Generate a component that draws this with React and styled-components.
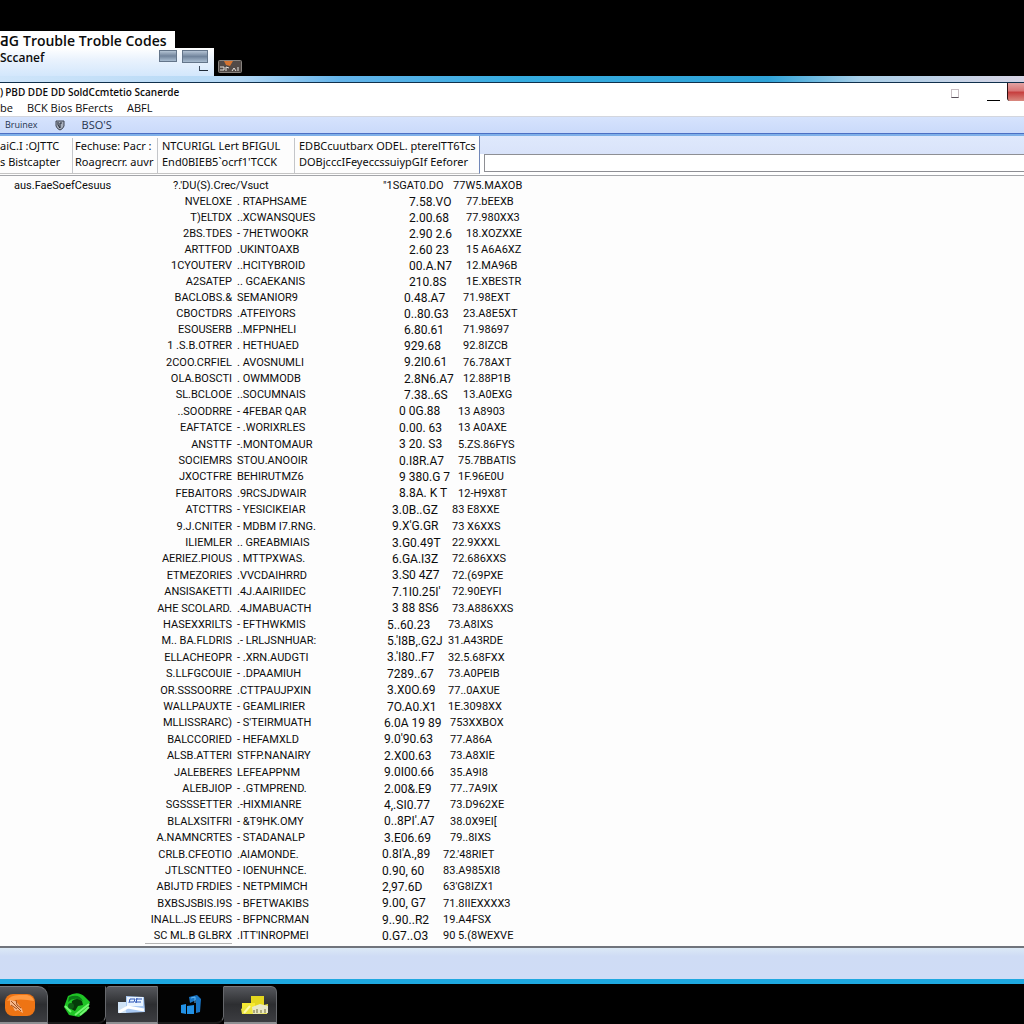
import React from "react";
import styled, { createGlobalStyle, css } from "styled-components";

const Global = createGlobalStyle`
  *, *::before, *::after { box-sizing: border-box; }
  body { margin: 0; background: #000; overflow: hidden; }
  button { margin: 0; padding: 0; border: 0; background: none; font: inherit; color: inherit; }
`;

const Desktop = styled.div`
  min-height: 100vh;
  display: flex;
  flex-direction: column;
  background: #000;
  color: #0c0c0c;
  font-family: "Open Sans", "Noto Sans", sans-serif;
  white-space: nowrap;
  overflow: hidden;
`;

const Banner = styled.header`
  display: flex;
  flex-direction: column;
  align-items: flex-start;
  padding-top: 31px;
`;

const BannerTitle = styled.h1`
  margin: 0;
  width: 175px;
  height: 17px;
  background: #fff;
  font-size: 14px;
  line-height: 20px;
  font-weight: 600;
  display: flex;
  gap: 4px;
`;

const BannerRow = styled.div`
  display: flex;
  align-items: flex-end;
  gap: 4px;
`;

const BannerTab = styled.div`
  width: 214px;
  height: 28px;
  display: flex;
  justify-content: space-between;
  background: linear-gradient(#fff 0, #e9f2fd 12px, #d3e7fc);
  font-size: 12px;
  line-height: 20px;
  font-weight: 600;
`;

const TabControls = styled.div`
  display: grid;
  grid-template-columns: 18px 26px;
  gap: 3px 5px;
  align-content: start;
  justify-items: end;
  padding: 2px 6px 0 0;
`;

const GlassButton = styled.button`
  width: 100%;
  height: ${(p) => p.$h}px;
  align-self: start;
  border: 1px solid #64758a;
  background: linear-gradient(#b4c3d4, #71849c 50%, #a9bcd0);
`;

const CornerButton = styled.button`
  grid-column: 1 / 3;
  width: 9px;
  height: 5px;
  border-left: 1px solid #3c4a5c;
  border-bottom: 1px solid #1f2a38;
`;

const Badge = styled.span`
  display: block;
  height: 13px;
  margin-bottom: 3px;
`;

const Window = styled.main`
  flex: 1;
  display: flex;
  flex-direction: column;
  background: #fdfdfd;
`;

const GlassEdge = styled.div`
  height: 7px;
  border-bottom: 1px solid #10304c;
  background: linear-gradient(90deg, #cfe5fa 0, #b4d8f5 240px, #64b4ea 340px, #35ace0 520px, #2fa3d8 75%, #a9cfe8 84%, #d8d4e4 100%);
`;

const Caption = styled.div`
  display: flex;
  justify-content: space-between;
  height: 33px;
  background: #fff;
`;

const CaptionText = styled.div`
  display: flex;
  flex-direction: column;
  padding-top: 2px;
  font-size: 11px;
  line-height: 15px;
`;

const WindowTitle = styled.h2`
  margin: 0;
  display: flex;
  gap: 2px;
  font: inherit;
  font-size: 10px;
  font-weight: 600;
`;

const Menu = styled.nav`
  display: flex;
  gap: 14px;
`;

const CaptionControls = styled.div`
  display: flex;
  align-items: flex-start;
`;

const Restore = styled.button`
  width: 8px;
  height: 9px;
  margin: 6px 28px 0 0;
  border: 1px solid #c9bfc4;
  border-bottom: 1px solid #59505a;
`;

const Minimise = styled.button`
  width: 13px;
  height: 18px;
  margin-right: 7px;
  border-bottom: 1px solid #000;
`;

const Close = styled.button`
  width: 17px;
  height: 18px;
  border-left: 1px solid #2a0f12;
  border-radius: 0 0 0 3px;
  background: linear-gradient(#e2a3a3, #d87474 45%, #c63c3c 50%, #d98a80);
`;

const Toolbar = styled.div`
  display: flex;
  align-items: center;
  height: 18px;
  padding-left: 5px;
  gap: 17px;
  background: linear-gradient(#d6e3fd, #cadafa);
  border-top: 1px solid #d3d6de;
  border-bottom: 1px solid #4c70c4;
  color: #26344e;
  font-size: 11px;
  line-height: 16px;
`;

const Tool = styled.button`
  display: flex;
  font-size: ${(p) => p.$size || 11}px;
`;

const TabStrip = styled.div`
  display: flex;
  height: 42px;
  border-top: 2px solid #7fb0e8;
  border-bottom: 1px solid #a4a6aa;
`;

const TabList = styled.nav`
  display: grid;
  grid-template-columns: 72px 85px 137px 185px;
  height: 38px;
  padding-top: 2px;
  border-bottom: 1px solid #c4c4c4;
  border-right: 1px solid #7187b8;
`;

const Tab = styled.button`
  display: flex;
  flex-direction: column;
  align-items: flex-start;
  padding-left: ${(p) => p.$pad}px;
  border-left: ${(p) => (p.$first ? 0 : 1)}px solid #c4c6ca;
  font-family: "Noto Sans", sans-serif;
  font-size: 11px;
  line-height: 16px;
`;

const SidePanel = styled.div`
  flex: 1;
  display: flex;
  flex-direction: column;
  padding: 0 0 3px 4px;
  background: linear-gradient(#dfe9fc, #d9e3fa 18px, #fff 18px);
`;

const Search = styled.input`
  width: 100%;
  height: 18px;
  margin-top: 18px;
  padding: 0 4px;
  border: 1px solid #8e8f94;
  border-right: 0;
  background: #fff;
  outline: 0;
`;

const Content = styled.section`
  flex: 1;
  padding-top: 2px;
`;

const Codes = styled.table`
  width: 540px;
  table-layout: fixed;
  border-collapse: collapse;
  font-family: Roboto, "Open Sans", sans-serif;
  font-size: 11px;
  line-height: 16px;
  text-align: left;

  th, td { padding: 0; font-weight: 400; height: 16px; }
`;

const Column = styled.col`
  width: ${(p) => p.$w}px;
`;

const Row = styled.tr`
  ${(p) =>
    p.$tall &&
    css`
      td { line-height: 17px; }
    `}
`;

const Cell = styled.td`
  && {
    padding-left: ${(p) => p.$lead || 0}px;
    text-align: ${(p) => (p.$end ? "right" : "left")};
    box-shadow: ${(p) => (p.$ruled ? "0 -1px 0 #b5b5b5 inset" : "none")};
  }
`;

const Reading = styled(Cell)`
  font-size: 12px;
`;

const HeadCell = styled.th`
  && { padding-left: ${(p) => p.$lead}px; }
`;

const StatusBar = styled.footer`
  height: 38px;
  border-top: 2px solid #70747c;
  border-bottom: 5px solid #1ea8e0;
  background: linear-gradient(#dbe9f6, #cfdcf5 8px, #cfdcf6);
`;

const Taskbar = styled.nav`
  display: flex;
  height: 40px;
  padding-top: 2px;
  background: #000;
`;

const Task = styled.button`
  display: flex;
  align-items: center;
  justify-content: center;
  width: ${(p) => p.$w}px;
  padding: 0 ${(p) => p.$right || 0}px 0 ${(p) => p.$left || 0}px;
  border-top: 1px solid ${(p) => (p.$lit ? "#77797d" : "#0a0a0a")};
  border-right: 1px solid #66686c;
  border-bottom: 2px solid ${(p) => (p.$lit ? "#8d8f92" : "#1b1b1b")};
  border-radius: ${(p) => p.$round || "0"};
  background: ${(p) => (p.$lit ? "linear-gradient(#55575c, #2d2e31 50%, #3c3d41)" : "#030303")};
`;

const OrangeIcon = () => (
  <svg width="30" height="24" viewBox="0 0 30 24">
    <rect x="0" y="1" width="30" height="22" rx="8" fill="#ee7414" />
    <path d="M2 8Q5 2 14 2h8q6 1 7 6-13-3-27 0Z" fill="#ff9a42" />
    <path d="M5 7l6 1 6 8 1 4-5-3-3 1-2-4-3-2Z" fill="#f6b78a" />
    <path d="M6 8l10 10M6 12l6 4M11 7l1 5 4 3" stroke="#9f4c19" fill="none" />
  </svg>
);

const GreenIcon = () => (
  <svg width="28" height="24" viewBox="0 0 28 24">
    <path d="M5 3Q15-3 22 4l5 5-3 9-8 6-10-2-5-8Z" fill="#1fc425" />
    <path d="M6 4q10-4 14 4-9-5-15 1Z" fill="#0a7a16" />
    <path d="M9 8q5-4 10 0l1 4-5 1-3 5-4-2Z" fill="#053a09" />
    <path d="M2 13l6 6M12 22L26 11M17 22l9-8" stroke="#75f573" strokeWidth="2" fill="none" />
    <circle cx="8" cy="13" r="3" fill="#0d5a13" />
  </svg>
);

const DocumentIcon = () => (
  <svg width="28" height="20" viewBox="0 0 28 20">
    <path d="M0 7h9v11H0Z" fill="#cfe2f5" />
    <path d="M8 1l18 1 1 15-19 1Z" fill="#a9c9f3" />
    <path d="M9 2h16v9H9Z" fill="#e9f4ff" />
    <path d="M11 8l1-4h5l-1 3h-4M18 4h6M17 7h6M19 3l-1 5" fill="none" stroke="#2b55b8" />
    <path d="M1 17l9-5 16 3" stroke="#fff" strokeWidth="3" fill="none" />
  </svg>
);

const BlueIcon = () => (
  <svg width="20" height="20" viewBox="0 0 20 20">
    <path d="M0 10l5-1v10l-5-1ZM6 11l7-1v9H6Z" fill="#2291e5" />
    <path d="M8 2l8-2 4 4-1 13-4 1V5L9 8Z" fill="#1875c5" />
    <path d="M10 3l4-1v6" stroke="#64b9f3" fill="none" />
  </svg>
);

const YellowIcon = () => (
  <svg width="28" height="20" viewBox="0 0 28 20">
    <path d="M10 1h13v10H10Z" fill="#e4d61e" />
    <path d="M1 8h13v10H1Z" fill="#f7e930" />
    <path d="M0 14l7-5 3 4 17-4-1 10H1Z" fill="#ece53f" />
    <path d="M11 12l8-3 8 2v7l-15 1Z" fill="#e9e8c8" />
    <path d="M13 18v-3M16 18v-4M20 18v-3M24 18v-4" stroke="#6f6b36" />
    <path d="M3 18l6-7" stroke="#fff9a8" strokeWidth="2" />
  </svg>
);

const BadgeIcon = () => (
  <svg width="24" height="13" viewBox="0 0 24 13" display="block">
    <rect x=".5" y=".5" width="23" height="12" rx="1" fill="#514a47" stroke="#87827e" />
    <path d="M6 1h9l-3 5-4-1Z" fill="#d47431" />
    <path d="M2 7h4v3H2M8 11V7l3 1M14 11l2-3 2 3M20 7v4" stroke="#e4e0dc" fill="none" />
  </svg>
);

const ShieldIcon = () => (
  <svg width="10" height="11" viewBox="0 0 10 11">
    <path d="M1 1h8v5q-1 3-4 4Q2 9 1 6Z" fill="#a9b0bd" stroke="#3d4350" />
    <path d="M3 2v3l2 3V3h2" stroke="#252b36" fill="none" />
  </svg>
);

/* Each block of readings sits a little further left than the one above it. */
const blocks = [
  { reading: 29, level: 26, rows: [
    ["NVELOXE", ". RTAPHSAME", "7.58.VO", "77.bEEXB"],
    ["T)ELTDX", "..XCWANSQUES", "2.00.68", "77.980XX3"],
    ["2BS.TDES", "- 7HETWOOKR", "2.90 2.6", "18.XOZXXE"],
    ["ARTTFOD", ".UKINTOAXB", "2.60 23", "15 A6A6XZ"],
    ["1CYOUTERV", "..HCITYBROID", "00.A.N7", "12.MA96B"],
    ["A2SATEP", ".. GCAEKANIS", "210.8S", "1E.XBESTR"],
  ] },
  { reading: 24, level: 23, rows: [
    ["BACLOBS.&", "SEMANIOR9", "0.48.A7", "71.98EXT"],
    ["CBOCTDRS", ".ATFEIYORS", "0..80.G3", "23.A8E5XT"],
    ["ESOUSERB", "..MFPNHELI", "6.80.61", "71.98697"],
    ["1 .S.B.OTRER", ". HETHUAED", "929.68", "92.8IZCB"],
    ["2COO.CRFIEL", ". AVOSNUMLI", "9.2I0.61", "76.78AXT"],
    ["OLA.BOSCTI", ". OWMMODB", "2.8N6.A7", "12.88P1B"],
    ["SL.BCLOOE", "..SOCUMNAIS", "7.38..6S", "13.A0EXG"],
  ] },
  { reading: 19, level: 18, rows: [
    ["..SOODRRE", "- 4FEBAR QAR", "0 0G.88", "13 A8903"],
    ["EAFTATCE", "- .WORIXRLES", "0.00. 63", "13 A0AXE"],
    ["ANSTTF", "-.MONTOMAUR", "3 20. S3", "5.ZS.86FYS"],
    ["SOCIEMRS", "STOU.ANOOIR", "0.I8R.A7", "75.7BBATIS"],
    ["JXOCTFRE", "BEHIRUTMZ6", "9 380.G 7", "1F.96E0U"],
    ["FEBAITORS", ".9RCSJDWAIR", "8.8A. K T", "12-H9X8T"],
  ] },
  { reading: 12, level: 12, rows: [
    ["ATCTTRS", "- YESICIKEIAR", "3.0B..GZ", "83 E8XXE"],
    ["9.J.CNITER", "- MDBM I7.RNG.", "9.X'G.GR", "73 X6XXS"],
    ["ILIEMLER", ".. GREABMIAIS", "3.G0.49T", "22.9XXXL"],
    ["AERIEZ.PIOUS", ". MTTPXWAS.", "6.GA.I3Z", "72.686XXS"],
    ["ETMEZORIES", ".VVCDAIHRRD", "3.S0 4Z7", "72.(69PXE"],
    ["ANSISAKETTI", ".4J.AAIRIIDEC", "7.1I0.25I'", "72.90EYFI"],
    ["AHE SCOLARD.", ".4JMABUACTH", "3 88 8S6", "73.A886XXS"],
  ] },
  { reading: 7, level: 8, rows: [
    ["HASEXXRILTS", "- EFTHWKMIS", "5..60.23", "73.A8IXS"],
    ["M.. BA.FLDRIS", ".- LRLJSNHUAR:", "5.'I8B,.G2J", "31.A43RDE"],
    ["ELLACHEOPR", "- .XRN.AUDGTI", "3.'I80..F7", "32.5.68FXX"],
    ["S.LLFGCOUIE", "- .DPAAMIUH", "7289..67", "73.A0PEIB"],
    ["OR.SSSOORRE", ".CTTPAUJPXIN", "3.X0O.69", "77..0AXUE"],
    ["WALLPAUXTE", "- GEAMLIRIER", "7O.A0.X1", "1E.3098XX"],
  ] },
  { reading: 4, level: 10, rows: [
    ["MLLISSRARC)", "- S'TEIRMUATH", "6.0A 19 89", "753XXBOX"],
    ["BALCCORIED", "- HEFAMXLD", "9.0'90.63", "77.A86A"],
    ["ALSB.ATTERI", "STFP.NANAIRY", "2.X00.63", "73.A8XIE"],
    ["JALEBERES", "LEFEAPPNM", "9.0I00.66", "35.A9I8"],
    ["ALEBJIOP", "- .GTMPREND.", "2.00&.E9", "77..7A9IX"],
    ["SGSSSETTER", ".-HIXMIANRE", "4,.SI0.77", "73.D962XE"],
    ["BLALXSITFRI", "- &T9HK.OMY", "0..8PI'.A7", "38.0X9EI["],
    ["A.NAMNCRTES", "- STADANALP", "3.E06.69", "79..8IXS"],
  ] },
  { reading: 2, level: 3, rows: [
    ["CRLB.CFEOTIO", ".AIAMONDE.", "0.8I'A.,89", "72.'48RIET"],
    ["JTLSCNTTEO", "- IOENUHNCE.", "0.90, 60", "83.A985XI8"],
    ["ABIJTD FRDIES", "- NETPMIMCH", "2,97.6D", "63'G8IZX1"],
    ["BXBSJSBIS.I9S", "- BFETWAKIBS", "9.00, G7", "71.8IIEXXXX3"],
    ["INALL.JS EEURS", "- BFPNCRMAN", "9..90..R2", "19.A4FSX"],
    ["SC ML.B GLBRX", ".ITT'INROPMEI", "0.G7..O3", "90 5.(8WEXVE"],
  ] },
];

const isTall = (n) => n > 11 && n < 47 && (n % 5 === 0 || n % 5 === 2);

function CodeTable() {
  let line = 1;
  return (
    <Codes>
      <colgroup>
        <Column $w={145} />
        <Column $w={87} />
        <Column $w={148} />
        <Column $w={60} />
        <Column $w={100} />
      </colgroup>
      <thead>
        <tr>
          <HeadCell $lead={14}>aus.FaeSoefCesuus</HeadCell>
          <HeadCell $lead={28} colSpan={2}>?.'DU(S).Crec/Vsuct</HeadCell>
          <HeadCell $lead={3}>"1SGAT0.DO</HeadCell>
          <HeadCell $lead={13}>77W5.MAXOB</HeadCell>
        </tr>
      </thead>
      {blocks.map((block, b) => (
        <tbody key={b}>
          {block.rows.map(([code, unit, reading, level], i) => {
            line += 1;
            return (
              <Row key={code} $tall={isTall(line)}>
                <Cell />
                <Cell $end $ruled={b === blocks.length - 1 && i === block.rows.length - 1}>{code}</Cell>
                <Cell $lead={5}>{unit}</Cell>
                <Reading $lead={block.reading}>{reading}</Reading>
                <Cell $lead={block.level}>{level}</Cell>
              </Row>
            );
          })}
        </tbody>
      ))}
    </Codes>
  );
}

const tabs = [
  { pad: 0, lines: ["aiC.I :OJTTC", "s Bistcapter"] },
  { pad: 2, lines: ["Fechuse: Pacr :", "Roagrecrr. auvr"] },
  { pad: 4, lines: ["NTCURIGL Lert BFIGUL", "End0BIEB5`ocrf1'TCCK"] },
  { pad: 4, lines: ["EDBCcuutbarx ODEL. pterelTT6Tcs", "DOBjcccIFeyeccssuiypGIf Eeforer"] },
];

export default function App() {
  return (
    <>
      <Global />
      <Desktop>
        <Banner>
          <BannerTitle>
            <span>ƋG</span>
            <span>Trouble Troble Codes</span>
          </BannerTitle>
          <BannerRow>
            <BannerTab>
              <span>Sccanef</span>
              <TabControls>
                <GlassButton $h={12} aria-label="Minimise" />
                <GlassButton $h={13} aria-label="Maximise" />
                <CornerButton aria-label="Restore" />
              </TabControls>
            </BannerTab>
            <Badge><BadgeIcon /></Badge>
          </BannerRow>
        </Banner>

        <Window>
          <GlassEdge />
          <Caption>
            <CaptionText>
              <WindowTitle><span>)</span><span>PBD DDE DD SoldCcmtetio Scanerde</span></WindowTitle>
              <Menu>
                <span>be</span>
                <span>BCK Bios BFercts</span>
                <span>ABFL</span>
              </Menu>
            </CaptionText>
            <CaptionControls>
              <Restore aria-label="Restore window" />
              <Minimise aria-label="Minimise window" />
              <Close aria-label="Close window" />
            </CaptionControls>
          </Caption>
          <Toolbar>
            <Tool $size={9}>Bruinex</Tool>
            <Tool aria-label="Protection"><ShieldIcon /></Tool>
            <Tool>BSO'S</Tool>
          </Toolbar>
          <TabStrip>
            <TabList>
              {tabs.map((tab, i) => (
                <Tab key={i} $pad={tab.pad} $first={i === 0}>
                  {tab.lines.map((text) => <span key={text}>{text}</span>)}
                </Tab>
              ))}
            </TabList>
            <SidePanel>
              <Search aria-label="Search codes" />
            </SidePanel>
          </TabStrip>
          <Content>
            <CodeTable />
          </Content>
          <StatusBar />
        </Window>

        <Taskbar>
          <Task $w={48} $right={8} $lit $round="0 10px 0 0" aria-label="Scanner"><OrangeIcon /></Task>
          <Task $w={58} $round="0 0 8px 0" aria-label="Sync"><GreenIcon /></Task>
          <Task $w={52} $lit $round="4px 0 0 0" aria-label="Documents"><DocumentIcon /></Task>
          <Task $w={66} $round="0 0 8px 0" aria-label="Transfer"><BlueIcon /></Task>
          <Task $w={53} $left={10} $lit $round="0 6px 0 0" aria-label="Folders"><YellowIcon /></Task>
        </Taskbar>
      </Desktop>
    </>
  );
}
